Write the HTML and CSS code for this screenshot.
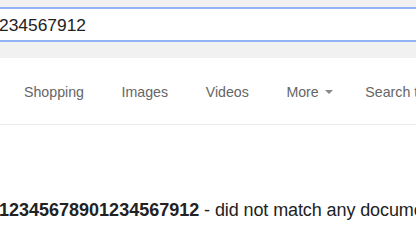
FILE: index.html
```html
<!DOCTYPE html>
<html>
<head>
<meta charset="utf-8">
<link rel="stylesheet" href="styles.css">
</head>
<body>
<div class="header">
  <div class="searchbox"><span class="query">234567912</span></div>
</div>
<nav class="tabs">
  <span class="tab">Shopping</span>
  <span class="tab">Images</span>
  <span class="tab">Videos</span>
  <span class="tab more">More <span class="arrow"></span></span>
  <span class="tab">Search tools</span>
</nav>
<p class="result"><b>12345678901234567912</b> - did not match any documents.</p>
</body>
</html>
```
FILE: styles.css
```css
html, body {
  margin: 0;
  padding: 0;
  width: 416px;
  height: 234px;
  overflow: hidden;
  background: #fff;
  font-family: "Liberation Sans", Arial, sans-serif;
  white-space: nowrap;
}
.header {
  background: #f1f1f1;
  height: 58px;
  padding-top: 7px;
  box-sizing: border-box;
}
.searchbox {
  margin-left: -4px;
  margin-right: -4px;
  height: 35px;
  box-sizing: border-box;
  background: #fff;
  border-top: 2px solid #8fb3f4;
  border-bottom: 2px solid #8fb3f4;
  display: flex;
  align-items: center;
  padding-left: 3px;
}
.query {
  font-size: 17.4px;
  color: #222;
  line-height: 20px;
}
.tabs {
  display: flex;
  align-items: center;
  gap: 37.6px;
  padding: 25.6px 0 24.4px 24px;
  border-bottom: 1px solid #ebebeb;
  overflow: hidden;
}
.tab {
  font-size: 14.2px;
  line-height: 16px;
  color: #666;
  flex: none;
}
.more {
  display: flex;
  align-items: center;
  margin-right: -5px;
}
.arrow {
  display: inline-block;
  width: 0;
  height: 0;
  margin-left: 6px;
  margin-top: 1px;
  border-left: 4px solid transparent;
  border-right: 4px solid transparent;
  border-top: 4px solid #888;
}
.result {
  margin: 74px 0 0 -1px;
  font-size: 18px;
  line-height: 22px;
  color: #222;
  letter-spacing: -0.1px;
}
.result b {
  font-weight: bold;
  letter-spacing: 0;
}
```
